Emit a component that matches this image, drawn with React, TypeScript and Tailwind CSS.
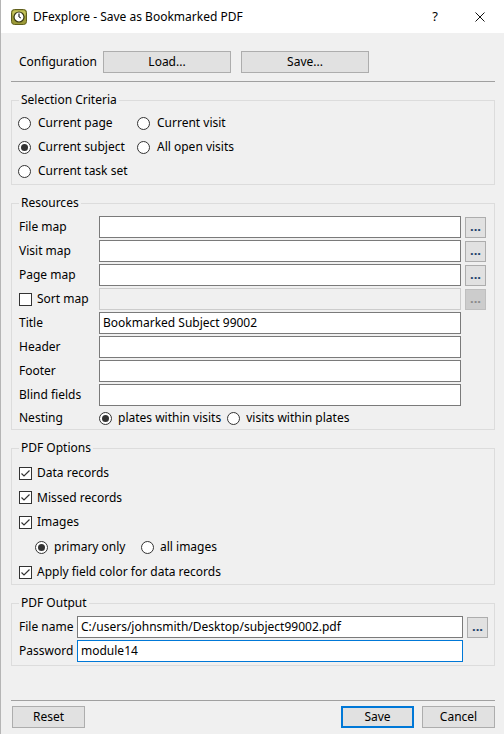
import React from "react";

const font = { fontFamily: '"Noto Sans", "Open Sans", sans-serif' };

const Radio = ({ checked }: { checked?: boolean }) => (
  <span className="flex h-[13px] w-[13px] shrink-0 items-center justify-center rounded-full border border-[#333333] bg-white">
    {checked && <span className="h-[7px] w-[7px] rounded-full bg-[#333333]" />}
  </span>
);

const Check = ({ checked }: { checked?: boolean }) => (
  <span className="flex h-[13px] w-[13px] shrink-0 items-center justify-center border border-[#333333] bg-white">
    {checked && (
      <svg width="11" height="11" viewBox="0 0 11 11">
        <polyline points="1.5,5.5 4,8 9.5,2.5" fill="none" stroke="#333333" strokeWidth="1.2" />
      </svg>
    )}
  </span>
);

const Dots = ({ disabled }: { disabled?: boolean }) => (
  <button
    className={
      disabled
        ? "ml-[4px] flex h-[21px] w-[21px] items-end justify-center border border-[#bfbfbf] bg-[#cccccc] pb-[4px] text-[13px] leading-none font-bold text-[#8a8a8a]"
        : "ml-[4px] flex h-[21px] w-[21px] items-end justify-center border border-[#adadad] bg-[#e1e1e1] pb-[4px] text-[13px] leading-none font-bold text-[#1b3f6a]"
    }
  >
    ...
  </button>
);

const Group = ({ title, children, className }: { title: string; children: React.ReactNode; className?: string }) => (
  <div className={"border border-[#dcdcdc] " + (className || "")}>
    <div className="-mt-[9px] flex h-[16px] items-center pl-[7px]">
      <span className="bg-[#f0f0f0] px-[2px] leading-none">{title}</span>
    </div>
    {children}
  </div>
);

const Field = ({ label, value }: { label: string; value?: string }) => (
  <div className="flex h-[24px] items-center pl-[7px]">
    <span className="w-[80px] shrink-0">{label}</span>
    <div className="flex h-[22px] w-[362px] items-center border border-[#7a7a7a] bg-white px-[3px]">{value}</div>
  </div>
);

export default function App() {
  return (
    <div
      style={font}
      className="flex h-[734px] w-[504px] flex-col overflow-hidden border-l border-[#b5b5b5] bg-[#f0f0f0] text-[12px] text-black"
    >
      <div className="flex h-[33px] shrink-0 items-center bg-white">
        <svg className="ml-[10px]" width="16" height="16" viewBox="0 0 16 16">
          <rect x="0.5" y="0.5" width="15" height="15" rx="3" fill="#9c9a38" stroke="#5f5e1c" />
          <rect x="1.5" y="1.5" width="13" height="6" rx="2" fill="#c4c25a" />
          <circle cx="8" cy="8" r="5" fill="#ffffff" stroke="#3a3a14" strokeWidth="1.2" />
          <line x1="8" y1="8" x2="8" y2="4.5" stroke="#222" strokeWidth="1.2" />
          <line x1="8" y1="8" x2="10" y2="9" stroke="#222" strokeWidth="1" />
        </svg>
        <span className="ml-[6px]">DFexplore - Save as Bookmarked PDF</span>
        <span className="ml-auto mr-[37px] text-[13px]">?</span>
        <svg className="mr-[19px]" width="10" height="10" viewBox="0 0 10 10">
          <path d="M0.5 0.5 L9.5 9.5 M9.5 0.5 L0.5 9.5" stroke="#111" strokeWidth="1" />
        </svg>
      </div>

      <div className="flex flex-1 flex-col pl-[10px] pr-[9px]">
        <div className="mt-[18px] flex h-[22px] items-center pl-[8px]">
          <span className="w-[84px]">Configuration</span>
          <button className="h-[22px] w-[128px] border border-[#adadad] bg-[#e1e1e1]">Load...</button>
          <button className="ml-[10px] h-[22px] w-[128px] border border-[#adadad] bg-[#e1e1e1]">Save...</button>
        </div>
        <div className="mt-[8px] border-t border-[#a0a0a0]" />

        <Group title="Selection Criteria" className="mt-[18px]">
          <div className="mt-[3px] grid grid-cols-[119px_1fr] pl-[6px]">
            <label className="flex h-[24px] items-center gap-[7px]"><Radio />Current page</label>
            <label className="flex h-[24px] items-center gap-[7px]"><Radio />Current visit</label>
            <label className="flex h-[24px] items-center gap-[7px]"><Radio checked />Current subject</label>
            <label className="flex h-[24px] items-center gap-[7px]"><Radio />All open visits</label>
            <label className="flex h-[24px] items-center gap-[7px]"><Radio />Current task set</label>
          </div>
          <div className="h-[1px]" />
        </Group>

        <Group title="Resources" className="mt-[18px]">
          <div className="mt-[4px]">
            <div className="flex items-center">
              <Field label="File map" />
              <Dots />
            </div>
            <div className="flex items-center">
              <Field label="Visit map" />
              <Dots />
            </div>
            <div className="flex items-center">
              <Field label="Page map" />
              <Dots />
            </div>
            <div className="flex h-[24px] items-center pl-[7px]">
              <label className="flex w-[80px] shrink-0 items-center gap-[5px]"><Check />Sort map</label>
              <div className="h-[22px] w-[362px] border border-[#cccccc] bg-[#f0f0f0]" />
              <Dots disabled />
            </div>
            <Field label="Title" value="Bookmarked Subject 99002" />
            <Field label="Header" />
            <Field label="Footer" />
            <Field label="Blind fields" />
            <div className="flex h-[22px] items-center pl-[7px]">
              <span className="w-[80px] shrink-0">Nesting</span>
              <label className="flex items-center gap-[6px]"><Radio checked />plates within visits</label>
              <label className="ml-[6px] flex items-center gap-[6px]"><Radio />visits within plates</label>
            </div>
          </div>
        </Group>

        <Group title="PDF Options" className="mt-[18px]">
          <div className="mt-[5px] pl-[7px]">
            <label className="flex h-[24px] items-center gap-[5px]"><Check checked />Data records</label>
            <label className="flex h-[25px] items-center gap-[5px]"><Check checked />Missed records</label>
            <label className="flex h-[24px] items-center gap-[5px]"><Check checked />Images</label>
            <div className="flex h-[26px] items-center pl-[16px]">
              <label className="flex w-[106px] items-center gap-[6px]"><Radio checked />primary only</label>
              <label className="flex items-center gap-[6px]"><Radio />all images</label>
            </div>
            <label className="flex h-[24px] items-center gap-[5px]"><Check checked />Apply field color for data records</label>
          </div>
        </Group>

        <Group title="PDF Output" className="mt-[18px]">
          <div className="mt-[4px] pl-[7px]">
            <div className="flex h-[24px] items-center">
              <span className="w-[58px] shrink-0">File name</span>
              <div className="flex h-[22px] w-[386px] items-center border border-[#7a7a7a] bg-white px-[3px]">
                C:/users/johnsmith/Desktop/subject99002.pdf
              </div>
              <Dots />
            </div>
            <div className="flex h-[24px] items-center">
              <span className="w-[58px] shrink-0">Password</span>
              <div className="flex h-[22px] w-[386px] items-center border border-[#0078d7] bg-white px-[3px]">module14</div>
            </div>
          </div>
          <div className="h-[2px]" />
        </Group>

        <div className="mt-[34px] border-t border-[#a0a0a0]" />
        <div className="mt-[5px] flex items-center pl-[1px]">
          <button className="h-[22px] w-[73px] border border-[#adadad] bg-[#e1e1e1]">Reset</button>
          <button className="ml-auto h-[22px] w-[73px] border-2 border-[#0078d7] bg-[#e1e1e1]">Save</button>
          <button className="ml-[8px] h-[22px] w-[73px] border border-[#adadad] bg-[#e1e1e1]">Cancel</button>
        </div>
      </div>
    </div>
  );
}
